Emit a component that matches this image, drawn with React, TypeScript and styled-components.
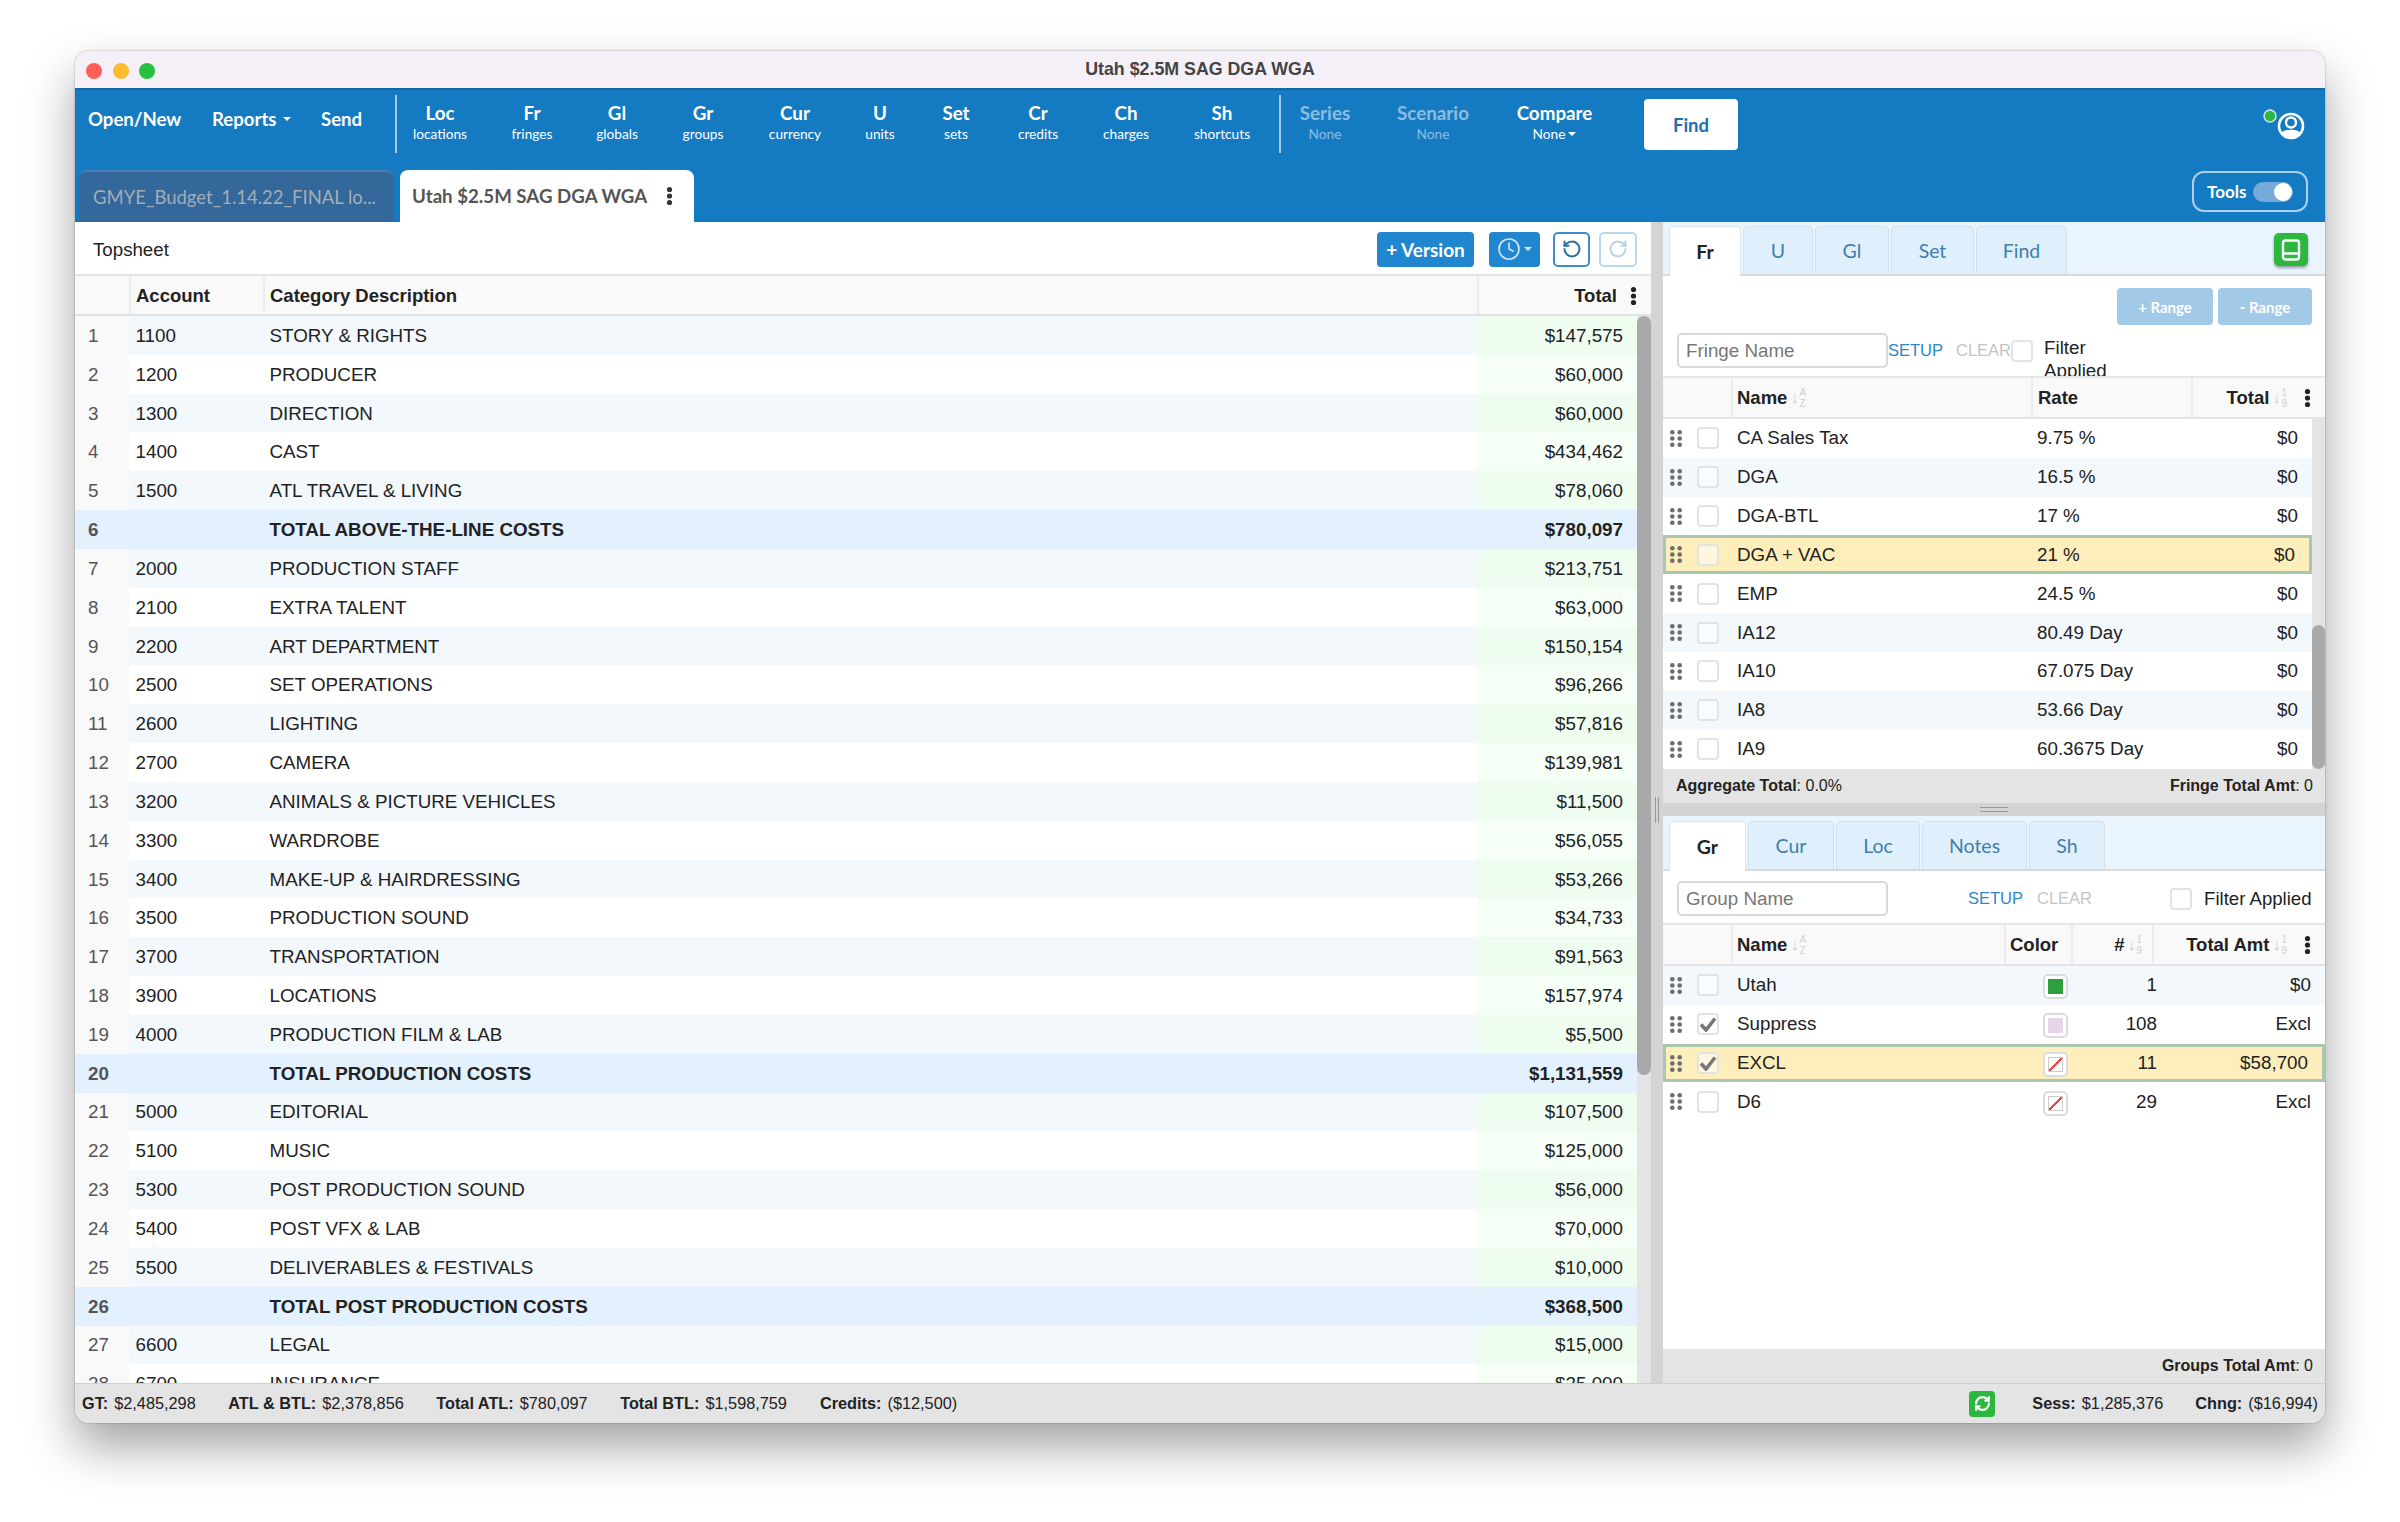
import React from "react";
import styled, { createGlobalStyle, css } from "styled-components";
import { Clock, RotateCcw, RotateCw, RefreshCw } from "lucide-react";

const Global = createGlobalStyle`
  html, body { margin: 0; padding: 0; width: 2400px; height: 1522px; background: #fff; overflow: hidden; }
  * { box-sizing: border-box; }
  body { font-family: "Liberation Sans", Arial, sans-serif; color: #222; }
`;

const Page = styled.div`
  width: 2400px;
  height: 1522px;
  padding: 51px 75px 99px;
`;
const Window = styled.div`
  width: 2250px;
  height: 1372px;
  border-radius: 14px;
  overflow: hidden;
  display: flex;
  flex-direction: column;
  background: #fff;
  box-shadow: 0 24px 48px rgba(0, 0, 0, 0.36), 0 0 2px rgba(0, 0, 0, 0.4);
`;
const TitleBar = styled.div`
  position: relative;
  height: 37px;
  flex: none;
  background: #f5f0f8;
  display: flex;
  align-items: center;
  justify-content: center;
`;
const Lights = styled.div`
  position: absolute;
  left: 11px;
  top: 12px;
  display: flex;
  gap: 10.5px;
`;
const Light = styled.span<{ $c: string }>`
  width: 16px;
  height: 16px;
  border-radius: 50%;
  background: ${(p) => p.$c};
`;
const Title = styled.div`
  font-size: 17.8px;
  font-weight: 700;
  color: #444;
`;
const TopBlue = styled.div`
  height: 134px;
  flex: none;
  background: #147ac2;
  border-top: 2px solid #1468a8;
  font-family: Lato, sans-serif;
  color: #fff;
`;
const NavRow = styled.div`
  height: 80px;
  display: flex;
  align-items: flex-start;
  padding-left: 13px;
`;
const NavLink = styled.div<{ $w: number }>`
  width: ${(p) => p.$w}px;
  margin-top: 17px;
  line-height: 24px;
  font-size: 18.6px;
  font-weight: 700;
  white-space: nowrap;
  display: flex;
  align-items: center;
`;
const Caret = styled.span<{ $c?: string; $s?: number; $ml?: number }>`
  display: inline-block;
  width: 0;
  height: 0;
  margin-left: ${(p) => p.$ml ?? 6}px;
  border-left: ${(p) => p.$s ?? 4.5}px solid transparent;
  border-right: ${(p) => p.$s ?? 4.5}px solid transparent;
  border-top: ${(p) => p.$s ?? 4.5}px solid ${(p) => p.$c ?? "#fff"};
`;
const NavSep = styled.div`
  width: 2px;
  height: 58px;
  margin-top: 5px;
  background: rgba(255, 255, 255, 0.6);
  flex: none;
`;
const NavStack = styled.div<{ $w: number; $off?: boolean }>`
  width: ${(p) => p.$w}px;
  flex: none;
  margin-top: 11px;
  text-align: center;
  opacity: ${(p) => (p.$off ? 0.5 : 1)};
`;
const NavTop = styled.div`
  font-size: 18.8px;
  font-weight: 700;
  line-height: 24px;
`;
const NavSub = styled.div`
  font-size: 13.7px;
  line-height: 18px;
  display: flex;
  justify-content: center;
  align-items: center;
`;
const FindButton = styled.div`
  width: 94px;
  height: 51px;
  margin: 9px 0 0 32px;
  background: #fff;
  border-radius: 4px;
  color: #1f6fae;
  font-size: 18.5px;
  font-weight: 700;
  display: flex;
  align-items: center;
  justify-content: center;
`;
const UserBadge = styled.svg`
  margin: 15px 20px 0 auto;
  flex: none;
`;
const TabRow = styled.div`
  height: 52px;
  display: flex;
  align-items: flex-end;
  padding-left: 4px;
`;
const DocTab = styled.div<{ $active?: boolean }>`
  height: 52px;
  border-radius: 8px 8px 0 0;
  display: flex;
  align-items: center;
  white-space: nowrap;
  ${(p) =>
    p.$active
      ? css`
          width: 294px;
          margin-left: 6px;
          padding-left: 12px;
          background: #fff;
          color: #555;
          font-size: 18.7px;
          font-weight: 700;
        `
      : css`
          width: 315px;
          padding-left: 14px;
          background: #34679a;
          border-top: 2px solid #4a7db0;
          color: #a3aeb8;
          font-size: 18.5px;
        `}
`;
const KebabSvg = styled.svg<{ $ml?: number }>`
  flex: none;
  margin-left: ${(p) => p.$ml ?? 0}px;
`;
const ToolsBox = styled.div`
  width: 116px;
  height: 41px;
  margin: 0 17px 10px auto;
  border: 2px solid rgba(255, 255, 255, 0.65);
  border-radius: 12px;
  display: flex;
  align-items: center;
  padding-left: 13px;
  font-size: 17px;
  font-weight: 700;
`;
const Toggle = styled.div`
  position: relative;
  width: 40px;
  height: 20px;
  margin-left: 7px;
  border-radius: 10px;
  background: #74a9d8;
`;
const Knob = styled.span`
  position: absolute;
  right: 1px;
  top: 1px;
  width: 18px;
  height: 18px;
  border-radius: 50%;
  background: #fff;
`;
const Main = styled.div`
  flex: 1;
  min-height: 0;
  display: flex;
`;
const LeftPane = styled.div`
  width: 1576px;
  flex: none;
  display: flex;
  flex-direction: column;
`;
const TopsheetBar = styled.div`
  height: 54px;
  flex: none;
  display: flex;
  align-items: center;
  padding: 2px 14px 0 18px;
  border-bottom: 2px solid #e2e2e2;
  font-size: 18.7px;
`;
const TopsheetTitle = styled.div`
  margin: 2px auto 0 0;
`;
const SolidButton = styled.div<{ $w: number; $ml: number }>`
  width: ${(p) => p.$w}px;
  height: 35px;
  margin-left: ${(p) => p.$ml}px;
  border-radius: 4px;
  background: #2186d0;
  color: #fff;
  font-family: Lato, sans-serif;
  font-size: 19px;
  font-weight: 700;
  display: flex;
  align-items: center;
  justify-content: center;
`;
const GhostButton = styled.div<{ $w: number; $ml: number; $off?: boolean }>`
  width: ${(p) => p.$w}px;
  height: 35px;
  margin-left: ${(p) => p.$ml}px;
  border-radius: 5px;
  border: 2px solid ${(p) => (p.$off ? "#b7d7ef" : "#3f8ccb")};
  color: ${(p) => (p.$off ? "#b7d2e6" : "#2e6fa6")};
  display: flex;
  align-items: center;
  justify-content: center;
`;
const LeftHead = styled.div`
  height: 40px;
  flex: none;
  display: grid;
  grid-template-columns: 54px 134px 1214px 1fr;
  background: #f9f9f9;
  border-bottom: 2px solid #e2e2e2;
`;
const HeadCell = styled.div<{ $right?: boolean; $pl?: number; $pr?: number; $line?: boolean }>`
  display: flex;
  align-items: center;
  justify-content: ${(p) => (p.$right ? "flex-end" : "flex-start")};
  padding: 1px ${(p) => p.$pr ?? 0}px 0 ${(p) => p.$pl ?? 6}px;
  border-left: ${(p) => (p.$line ? "2px solid #ececec" : "none")};
  font-size: 18.5px;
  font-weight: 700;
  color: #222;
  white-space: nowrap;
`;
const LeftBody = styled.div`
  flex: 1;
  min-height: 0;
  display: flex;
`;
const LeftRows = styled.div`
  flex: 1;
  overflow: hidden;
`;
const LeftRow = styled.div<{ $total: boolean; $odd: boolean }>`
  height: 38.83px;
  display: grid;
  grid-template-columns: 54px 134px 1214px 1fr;
  align-items: stretch;
  font-size: 18.8px;
  background: ${(p) => (p.$total ? "#e3f0fd" : p.$odd ? "#f2f8fc" : "#fff")};
  font-weight: ${(p) => (p.$total ? 700 : 400)};
`;
const IndexCell = styled.div<{ $total: boolean }>`
  display: flex;
  align-items: center;
  padding: 1px 0 0 13px;
  color: #555;
  background: ${(p) => (p.$total ? "#e3f0fd" : "#f9f9f9")};
`;
const TextCell = styled.div`
  display: flex;
  align-items: center;
  padding: 1px 0 0 6.5px;
  white-space: nowrap;
`;
const AmountCell = styled.div<{ $total: boolean; $odd: boolean }>`
  display: flex;
  align-items: center;
  justify-content: flex-end;
  padding: 1px 14px 0 0;
  background: ${(p) => (p.$total ? "#e3f0fd" : p.$odd ? "#effcf0" : "#f6fff6")};
`;
const Track = styled.div<{ $w: number }>`
  width: ${(p) => p.$w}px;
  flex: none;
  background: #e4e4e4;
  position: relative;
`;
const Thumb = styled.div<{ $top: number; $h: number }>`
  position: absolute;
  left: 0;
  right: 0;
  top: ${(p) => p.$top}px;
  height: ${(p) => p.$h}px;
  border-radius: 7px;
  background: #a9a9a9;
`;
const Splitter = styled.div`
  position: relative;
  width: 12px;
  flex: none;
  background: #d4d4d4;
`;
const SplitGrip = styled.div`
  position: absolute;
  left: 4px;
  top: 575px;
  width: 4px;
  height: 26px;
  border-left: 1px solid #999;
  border-right: 1px solid #999;
`;
const RightPane = styled.div`
  flex: 1;
  min-width: 0;
  display: flex;
  flex-direction: column;
`;
const TabStrip = styled.div<{ $h: number }>`
  position: relative;
  height: ${(p) => p.$h}px;
  flex: none;
  display: flex;
  align-items: flex-end;
  gap: 2px;
  padding-left: 6px;
  background: #e9f4fd;
  border-bottom: 2px solid #d9d9d9;
`;
const PanelTab = styled.div<{ $w: number; $active?: boolean }>`
  width: ${(p) => p.$w}px;
  height: 48px;
  border-radius: 5px 5px 0 0;
  display: flex;
  align-items: center;
  justify-content: center;
  font-family: Lato, sans-serif;
  font-size: 19.5px;
  ${(p) =>
    p.$active
      ? css`
          background: #fff;
          color: #222;
          font-weight: 700;
          height: 50px;
          margin-bottom: -2px;
          border: 1px solid #d9e6f0;
          border-bottom: none;
        `
      : css`
          background: #dfeffc;
          color: #3f7fae;
          border: 1px solid #cfe0ee;
          border-bottom: none;
        `}
`;
const LayoutButton = styled.div`
  position: absolute;
  right: 17px;
  top: 11px;
  width: 34px;
  height: 33px;
  border-radius: 5px;
  background: #2cb83f;
  box-shadow: 0 2px 3px rgba(0, 0, 0, 0.35);
  display: flex;
  align-items: center;
  justify-content: center;
`;
const FringeTools = styled.div`
  height: 102px;
  flex: none;
  overflow: hidden;
  border-bottom: 2px solid #e6e6e6;
`;
const RangeRow = styled.div`
  display: flex;
  justify-content: flex-end;
  gap: 5px;
  padding: 12px 13px 0 0;
`;
const RangeButton = styled.div<{ $w: number }>`
  width: ${(p) => p.$w}px;
  height: 37px;
  border-radius: 4px;
  background: #a3c9e9;
  color: #fff;
  font-family: Lato, sans-serif;
  font-size: 15px;
  font-weight: 700;
  display: flex;
  align-items: center;
  justify-content: center;
`;
const FilterRow = styled.div<{ $mt: number }>`
  height: 35px;
  display: flex;
  align-items: center;
  padding-left: 14px;
  margin-top: ${(p) => p.$mt}px;
`;
const NameInput = styled.div`
  width: 211px;
  height: 35px;
  flex: none;
  border: 2px solid #d8d8d8;
  border-radius: 5px;
  padding-left: 7px;
  display: flex;
  align-items: center;
  font-size: 18.8px;
  color: #777;
`;
const ActionLink = styled.div<{ $off?: boolean; $ml: number }>`
  margin-left: ${(p) => p.$ml}px;
  font-size: 16.5px;
  color: ${(p) => (p.$off ? "#c4c4c4" : "#2f86c9")};
`;
const CheckBox = styled.div<{ $ml?: number }>`
  width: 22px;
  height: 22px;
  flex: none;
  margin-left: ${(p) => p.$ml ?? 0}px;
  border: 2px solid #e3e3e3;
  border-radius: 4px;
  background: rgba(255, 255, 255, 0.5);
  display: flex;
  align-items: center;
  justify-content: center;
`;
const FilterWrap = styled.div`
  align-self: flex-start;
  width: 95px;
  margin: 3px 0 0 11px;
  font-size: 18.8px;
  line-height: 23px;
`;
const FilterInline = styled.div`
  margin-left: 12px;
  font-size: 18.6px;
  white-space: nowrap;
`;
const PanelHead = styled.div<{ $cols: string }>`
  height: 41px;
  flex: none;
  display: grid;
  grid-template-columns: ${(p) => p.$cols};
  background: #f9f9f9;
  border-bottom: 2px solid #e4e4e4;
`;
const SortMark = styled.span`
  display: inline-flex;
  align-items: center;
  margin-left: 3px;
  color: #d0d0d0;
  font-weight: 400;
`;
const SortArrow = styled.span`
  font-size: 16px;
  line-height: 1;
`;
const SortChars = styled.span`
  display: flex;
  flex-direction: column;
  font-size: 10px;
  line-height: 11px;
  margin-left: 1px;
`;
const FringeBody = styled.div`
  height: 350px;
  flex: none;
  display: flex;
`;
const RowsColumn = styled.div`
  flex: 1;
  min-width: 0;
  overflow: hidden;
`;
const PanelRow = styled.div<{ $cols: string; $tint: boolean; $sel?: boolean }>`
  height: 38.83px;
  display: grid;
  grid-template-columns: ${(p) => p.$cols};
  align-items: center;
  font-size: 18.8px;
  background: ${(p) => (p.$sel ? "#fdeebc" : p.$tint ? "#f2f8fc" : "#fff")};
  box-shadow: ${(p) => (p.$sel ? "inset 0 0 0 3px #a9c7ae" : "none")};
`;
const GripCell = styled.div`
  display: flex;
  align-items: center;
  padding-left: 7px;
  gap: 15px;
`;
const NameCell = styled.div`
  padding-left: 6px;
  white-space: nowrap;
`;
const RightCell = styled.div<{ $pr: number }>`
  text-align: right;
  padding-right: ${(p) => p.$pr}px;
  white-space: nowrap;
`;
const SwatchCell = styled.div`
  display: flex;
  justify-content: flex-start;
`;
const Swatch = styled.div`
  width: 25px;
  height: 25px;
  margin-top: 3px;
  border: 2px solid #dcdcdc;
  border-radius: 5px;
  background: #fff;
  padding: 3px;
  display: flex;
`;
const SwatchFill = styled.div<{ $c?: string }>`
  flex: 1;
  background: ${(p) =>
    p.$c ??
    "linear-gradient(to bottom right, #fff 46%, #ef4444 46%, #ef4444 54%, #fff 54%)"};
  border: ${(p) => (p.$c ? "none" : "1px solid #ccc")};
`;
const PanelFoot = styled.div<{ $end?: boolean }>`
  height: 34px;
  flex: none;
  background: #e4e4e4;
  display: flex;
  align-items: center;
  justify-content: ${(p) => (p.$end ? "flex-end" : "space-between")};
  padding: 0 12px 0 13px;
  font-size: 16px;
  color: #222;
  b { font-weight: 700; }
`;
const HSplit = styled.div`
  height: 13px;
  flex: none;
  background: #d4d4d4;
  display: flex;
  align-items: center;
  justify-content: center;
`;
const HGrip = styled.div`
  width: 28px;
  height: 5px;
  border-top: 1px solid #999;
  border-bottom: 1px solid #999;
`;
const GroupTools = styled.div`
  height: 54px;
  flex: none;
  border-bottom: 2px solid #e6e6e6;
  padding-top: 10px;
`;
const GroupBody = styled.div`
  flex: 1;
  min-height: 0;
  overflow: hidden;
`;
const StatusBar = styled.div`
  height: 40px;
  flex: none;
  background: #e4e4e4;
  border-top: 1px solid #cfcfcf;
  display: flex;
  align-items: center;
  padding: 0 7px;
  font-size: 16.3px;
  color: #222;
`;
const Stat = styled.div<{ $ml: number }>`
  margin-left: ${(p) => p.$ml}px;
  white-space: nowrap;
  b {
    font-weight: 700;
    margin-right: 6px;
  }
`;
const SyncButton = styled.div`
  width: 26px;
  height: 26px;
  margin-left: auto;
  border-radius: 4px;
  background: #2cb83f;
  display: flex;
  align-items: center;
  justify-content: center;
  color: #fff;
`;

const Kebab = ({ ml, c = "#222" }: { ml?: number; c?: string }) => (
  <KebabSvg $ml={ml} width="7" height="20" viewBox="0 0 7 20">
    <circle cx="3.5" cy="3.5" r="2.6" fill={c} />
    <circle cx="3.5" cy="10" r="2.6" fill={c} />
    <circle cx="3.5" cy="16.5" r="2.6" fill={c} />
  </KebabSvg>
);
const Grip = () => (
  <svg width="12" height="17" viewBox="0 0 12 17">
    {[2.3, 8.5, 14.7].map((y) =>
      [2.3, 9.7].map((x) => <circle key={`${x}-${y}`} cx={x} cy={y} r="2.3" fill="#6d6d6d" />)
    )}
  </svg>
);
const Check = () => (
  <svg width="18" height="16" viewBox="0 0 18 16">
    <path d="M2 8.5 L7 14 L16 2.5" fill="none" stroke="#777" strokeWidth="3.6" />
  </svg>
);
const Sort = ({ chars }: { chars: [string, string] }) => (
  <SortMark>
    <SortArrow>↓</SortArrow>
    <SortChars>
      <span>{chars[0]}</span>
      <span>{chars[1]}</span>
    </SortChars>
  </SortMark>
);

const NAV = [
  ["Loc", "locations", 86],
  ["Fr", "fringes", 98],
  ["Gl", "globals", 72],
  ["Gr", "groups", 100],
  ["Cur", "currency", 84],
  ["U", "units", 86],
  ["Set", "sets", 66],
  ["Cr", "credits", 98],
  ["Ch", "charges", 78],
  ["Sh", "shortcuts", 114],
] as const;

type Line = [number, string, string, string, boolean?];
const LINES: Line[] = [
  [1, "1100", "STORY & RIGHTS", "$147,575"],
  [2, "1200", "PRODUCER", "$60,000"],
  [3, "1300", "DIRECTION", "$60,000"],
  [4, "1400", "CAST", "$434,462"],
  [5, "1500", "ATL TRAVEL & LIVING", "$78,060"],
  [6, "", "TOTAL ABOVE-THE-LINE COSTS", "$780,097", true],
  [7, "2000", "PRODUCTION STAFF", "$213,751"],
  [8, "2100", "EXTRA TALENT", "$63,000"],
  [9, "2200", "ART DEPARTMENT", "$150,154"],
  [10, "2500", "SET OPERATIONS", "$96,266"],
  [11, "2600", "LIGHTING", "$57,816"],
  [12, "2700", "CAMERA", "$139,981"],
  [13, "3200", "ANIMALS & PICTURE VEHICLES", "$11,500"],
  [14, "3300", "WARDROBE", "$56,055"],
  [15, "3400", "MAKE-UP & HAIRDRESSING", "$53,266"],
  [16, "3500", "PRODUCTION SOUND", "$34,733"],
  [17, "3700", "TRANSPORTATION", "$91,563"],
  [18, "3900", "LOCATIONS", "$157,974"],
  [19, "4000", "PRODUCTION FILM & LAB", "$5,500"],
  [20, "", "TOTAL PRODUCTION COSTS", "$1,131,559", true],
  [21, "5000", "EDITORIAL", "$107,500"],
  [22, "5100", "MUSIC", "$125,000"],
  [23, "5300", "POST PRODUCTION SOUND", "$56,000"],
  [24, "5400", "POST VFX & LAB", "$70,000"],
  [25, "5500", "DELIVERABLES & FESTIVALS", "$10,000"],
  [26, "", "TOTAL POST PRODUCTION COSTS", "$368,500", true],
  [27, "6600", "LEGAL", "$15,000"],
  [28, "6700", "INSURANCE", "$25,000"],
];

const FRINGES = [
  ["CA Sales Tax", "9.75 %"],
  ["DGA", "16.5 %"],
  ["DGA-BTL", "17 %"],
  ["DGA + VAC", "21 %"],
  ["EMP", "24.5 %"],
  ["IA12", "80.49 Day"],
  ["IA10", "67.075 Day"],
  ["IA8", "53.66 Day"],
  ["IA9", "60.3675 Day"],
];

const GROUPS: { n: string; c?: string; num: string; amt: string; on: boolean; sel?: boolean; tint?: boolean }[] = [
  { n: "Utah", c: "#2e9e3f", num: "1", amt: "$0", on: false, tint: true },
  { n: "Suppress", c: "#e6d6ec", num: "108", amt: "Excl", on: true },
  { n: "EXCL", num: "11", amt: "$58,700", on: true, sel: true },
  { n: "D6", num: "29", amt: "Excl", on: false },
];

const FRINGE_HEAD = "68px 300px 160px 1fr";
const FRINGE_COLS = "68px 300px 160px 1fr";
const GROUP_HEAD = "68px 273px 67px 81px 1fr";
const GROUP_COLS = "68px 312px 31px 83px 1fr";

export default function App() {
  return (
    <Page>
      <Global />
      <Window>
        <TitleBar>
          <Lights>
            <Light $c="#ff5f57" />
            <Light $c="#febc2e" />
            <Light $c="#28c03f" />
          </Lights>
          <Title>Utah $2.5M SAG DGA WGA</Title>
        </TitleBar>
        <TopBlue>
          <NavRow>
            <NavLink $w={124}>Open/New</NavLink>
            <NavLink $w={109}>
              Reports
              <Caret />
            </NavLink>
            <NavLink $w={74}>Send</NavLink>
            <NavSep />
            {NAV.map(([t, s, w]) => (
              <NavStack key={t} $w={w}>
                <NavTop>{t}</NavTop>
                <NavSub>{s}</NavSub>
              </NavStack>
            ))}
            <NavSep />
            <NavStack $w={88} $off>
              <NavTop>Series</NavTop>
              <NavSub>None</NavSub>
            </NavStack>
            <NavStack $w={128} $off>
              <NavTop>Scenario</NavTop>
              <NavSub>None</NavSub>
            </NavStack>
            <NavStack $w={115}>
              <NavTop>Compare</NavTop>
              <NavSub>
                None
                <Caret $s={4} $ml={3} />
              </NavSub>
            </NavStack>
            <FindButton>Find</FindButton>
            <UserBadge width="44" height="36" viewBox="0 0 44 36">
              <circle cx="9" cy="11" r="6" fill="#2cb83f" stroke="#cfe6f5" strokeWidth="1.5" />
              <circle cx="30" cy="21" r="12" fill="#147ac2" stroke="#fff" strokeWidth="2.6" />
              <circle cx="30" cy="17.5" r="5" fill="none" stroke="#fff" strokeWidth="2.4" />
              <path d="M20.5 28 C23 23.5 37 23.5 39.5 28 C36 33.5 24 33.5 20.5 28 Z" fill="#fff" />
            </UserBadge>
          </NavRow>
          <TabRow>
            <DocTab>GMYE_Budget_1.14.22_FINAL lo...</DocTab>
            <DocTab $active>
              Utah $2.5M SAG DGA WGA
              <Kebab ml={19} c="#333" />
            </DocTab>
            <ToolsBox>
              Tools
              <Toggle>
                <Knob />
              </Toggle>
            </ToolsBox>
          </TabRow>
        </TopBlue>
        <Main>
          <LeftPane>
            <TopsheetBar>
              <TopsheetTitle>Topsheet</TopsheetTitle>
              <SolidButton $w={97} $ml={0}>+ Version</SolidButton>
              <SolidButton $w={51} $ml={15}>
                <Clock size={24} strokeWidth={1.7} color="#cfe4f5" />
                <Caret $c="#cfe4f5" $ml={3} />
              </SolidButton>
              <GhostButton $w={37} $ml={13}>
                <RotateCcw size={20} strokeWidth={2.4} />
              </GhostButton>
              <GhostButton $w={38} $ml={9} $off>
                <RotateCw size={20} strokeWidth={2.4} />
              </GhostButton>
            </TopsheetBar>
            <LeftHead>
              <HeadCell />
              <HeadCell $line $pl={5}>Account</HeadCell>
              <HeadCell $line $pl={5}>Category Description</HeadCell>
              <HeadCell $line $right $pr={14}>
                Total
                <Kebab ml={13} />
              </HeadCell>
            </LeftHead>
            <LeftBody>
              <LeftRows>
                {LINES.map(([i, acc, desc, amt, total]) => {
                  const odd = i % 2 === 1;
                  return (
                    <LeftRow key={i} $total={!!total} $odd={odd}>
                      <IndexCell $total={!!total}>{i}</IndexCell>
                      <TextCell>{acc}</TextCell>
                      <TextCell>{desc}</TextCell>
                      <AmountCell $total={!!total} $odd={odd}>{amt}</AmountCell>
                    </LeftRow>
                  );
                })}
              </LeftRows>
              <Track $w={14}>
                <Thumb $top={0} $h={759} />
              </Track>
            </LeftBody>
          </LeftPane>
          <Splitter>
            <SplitGrip />
          </Splitter>
          <RightPane>
            <TabStrip $h={54}>
              <PanelTab $w={72} $active>Fr</PanelTab>
              <PanelTab $w={70}>U</PanelTab>
              <PanelTab $w={74}>Gl</PanelTab>
              <PanelTab $w={83}>Set</PanelTab>
              <PanelTab $w={91}>Find</PanelTab>
              <LayoutButton>
                <svg width="20" height="22" viewBox="0 0 20 22">
                  <rect x="2" y="1.5" width="16" height="19" rx="2.5" fill="none" stroke="#fff" strokeWidth="2.4" />
                  <line x1="2" y1="14.5" x2="18" y2="14.5" stroke="#fff" strokeWidth="2.4" />
                </svg>
              </LayoutButton>
            </TabStrip>
            <FringeTools>
              <RangeRow>
                <RangeButton $w={96}>+ Range</RangeButton>
                <RangeButton $w={94}>- Range</RangeButton>
              </RangeRow>
              <FilterRow $mt={8}>
                <NameInput>Fringe Name</NameInput>
                <ActionLink $ml={0}>SETUP</ActionLink>
                <ActionLink $ml={13} $off>CLEAR</ActionLink>
                <CheckBox $ml={0} />
                <FilterWrap>Filter Applied</FilterWrap>
              </FilterRow>
            </FringeTools>
            <PanelHead $cols={FRINGE_HEAD}>
              <HeadCell />
              <HeadCell $line $pl={4}>
                Name
                <Sort chars={["A", "Z"]} />
              </HeadCell>
              <HeadCell $line $pl={5}>Rate</HeadCell>
              <HeadCell $line $right $pr={14}>
                Total
                <Sort chars={["1", "9"]} />
                <Kebab ml={17} />
              </HeadCell>
            </PanelHead>
            <FringeBody>
              <RowsColumn>
                {FRINGES.map(([n, r], i) => (
                  <PanelRow key={n} $cols={FRINGE_COLS} $tint={i % 2 === 1} $sel={i === 3}>
                    <GripCell>
                      <Grip />
                      <CheckBox />
                    </GripCell>
                    <NameCell>{n}</NameCell>
                    <NameCell>{r}</NameCell>
                    <RightCell $pr={i === 3 ? 17 : 14}>$0</RightCell>
                  </PanelRow>
                ))}
              </RowsColumn>
              <Track $w={13}>
                <Thumb $top={206} $h={144} />
              </Track>
            </FringeBody>
            <PanelFoot>
              <span>
                <b>Aggregate Total</b>: 0.0%
              </span>
              <span>
                <b>Fringe Total Amt</b>: 0
              </span>
            </PanelFoot>
            <HSplit>
              <HGrip />
            </HSplit>
            <TabStrip $h={55}>
              <PanelTab $w={77} $active>Gr</PanelTab>
              <PanelTab $w={86}>Cur</PanelTab>
              <PanelTab $w={84}>Loc</PanelTab>
              <PanelTab $w={105}>Notes</PanelTab>
              <PanelTab $w={76}>Sh</PanelTab>
            </TabStrip>
            <GroupTools>
              <FilterRow $mt={0}>
                <NameInput>Group Name</NameInput>
                <ActionLink $ml={80}>SETUP</ActionLink>
                <ActionLink $ml={14} $off>CLEAR</ActionLink>
                <CheckBox $ml={78} />
                <FilterInline>Filter Applied</FilterInline>
              </FilterRow>
            </GroupTools>
            <PanelHead $cols={GROUP_HEAD}>
              <HeadCell />
              <HeadCell $line $pl={4}>
                Name
                <Sort chars={["A", "Z"]} />
              </HeadCell>
              <HeadCell $line $pl={4}>Color</HeadCell>
              <HeadCell $line $right $pr={10}>
                #
                <Sort chars={["1", "9"]} />
              </HeadCell>
              <HeadCell $line $right $pr={14}>
                Total Amt
                <Sort chars={["1", "9"]} />
                <Kebab ml={17} />
              </HeadCell>
            </PanelHead>
            <GroupBody>
              {GROUPS.map((g) => (
                <PanelRow key={g.n} $cols={GROUP_COLS} $tint={!!g.tint} $sel={g.sel}>
                  <GripCell>
                    <Grip />
                    <CheckBox>{g.on && <Check />}</CheckBox>
                  </GripCell>
                  <NameCell>{g.n}</NameCell>
                  <SwatchCell>
                    <Swatch>
                      <SwatchFill $c={g.c} />
                    </Swatch>
                  </SwatchCell>
                  <RightCell $pr={0}>{g.num}</RightCell>
                  <RightCell $pr={g.sel ? 17 : 14}>{g.amt}</RightCell>
                </PanelRow>
              ))}
            </GroupBody>
            <PanelFoot $end>
              <span>
                <b>Groups Total Amt</b>: 0
              </span>
            </PanelFoot>
          </RightPane>
        </Main>
        <StatusBar>
          <Stat $ml={0}><b>GT:</b>$2,485,298</Stat>
          <Stat $ml={32.5}><b>ATL &amp; BTL:</b>$2,378,856</Stat>
          <Stat $ml={32.5}><b>Total ATL:</b>$780,097</Stat>
          <Stat $ml={32.5}><b>Total BTL:</b>$1,598,759</Stat>
          <Stat $ml={33}><b>Credits:</b>($12,500)</Stat>
          <SyncButton>
            <RefreshCw size={17} strokeWidth={3} />
          </SyncButton>
          <Stat $ml={37}><b>Sess:</b>$1,285,376</Stat>
          <Stat $ml={32}><b>Chng:</b>($16,994)</Stat>
        </StatusBar>
      </Window>
    </Page>
  );
}
